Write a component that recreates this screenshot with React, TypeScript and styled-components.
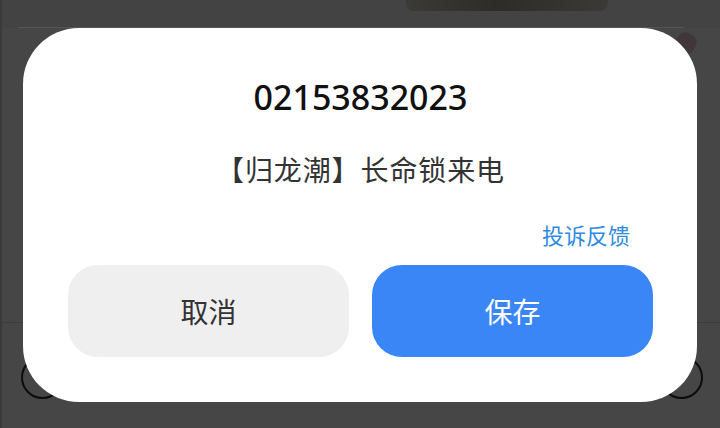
import React from "react";
import styled, { createGlobalStyle } from "styled-components";

const Global = createGlobalStyle`
  html, body { margin: 0; padding: 0; background: #454545; }
  body { font-family: "Noto Sans", "Noto Sans CJK SC", sans-serif; }
  * { box-sizing: border-box; }
`;

const Page = styled.div`
  position: relative;
  width: 720px;
  height: 428px;
  overflow: hidden;
  background: #464646;
  border-left: 2px solid #3a3a3a;
  display: flex;
  flex-direction: column;
`;

const TopBand = styled.div`
  position: relative;
  height: 28px;
  flex: none;
  background: #434343;
  &::after {
    content: "";
    position: absolute;
    left: 16px;
    right: 36px;
    bottom: 0;
    height: 1px;
    background: #555555;
  }
`;

const Thumb = styled.div`
  position: absolute;
  left: 404px;
  top: -10px;
  width: 202px;
  height: 21px;
  border-radius: 8px;
  z-index: 1;
  background: linear-gradient(90deg, #3c3a36 0%, #2e2c28 45%, #34322e 70%, #3b3a37 100%);
`;

const Divider = styled.div`
  position: absolute;
  left: 0;
  right: 0;
  top: 322px;
  height: 1px;
  background: #3c3c3c;
`;

const Ring = styled.div<{ $left: number }>`
  position: absolute;
  left: ${(p) => p.$left}px;
  top: 356px;
  width: 43px;
  height: 43px;
  border-radius: 50%;
  border: 2px solid #0c0c0c;
`;

const Blob = styled.div`
  position: absolute;
  left: 674px;
  top: 33px;
  width: 20px;
  height: 20px;
  border-radius: 40%;
  background: #41363a;
  transform: rotate(30deg);
`;

const Dialog = styled.div`
  position: relative;
  margin-left: 21px;
  width: 674px;
  height: 374px;
  background: #ffffff;
  border-radius: 56px;
  padding: 0 44px 0 45px;
  display: flex;
  flex-direction: column;
  align-items: center;
`;

const Phone = styled.div`
  margin-top: 49px;
  height: 40px;
  line-height: 40px;
  font-family: "Noto Sans", sans-serif;
  font-size: 34px;
  font-weight: 500;
  color: #111111;
`;

const Subtitle = styled.div`
  margin-top: 32px;
  height: 40px;
  line-height: 40px;
  font-family: "Noto Sans CJK SC", sans-serif;
  font-size: 28px;
  letter-spacing: 0.9px;
  color: #333333;
`;

const Link = styled.a`
  align-self: flex-end;
  margin-top: 30px;
  margin-right: 23px;
  height: 30px;
  line-height: 30px;
  font-family: "Noto Sans CJK SC", sans-serif;
  font-size: 22px;
  color: #2f8ae0;
  text-decoration: none;
`;

const Buttons = styled.div`
  margin-top: 16px;
  width: 100%;
  display: grid;
  grid-template-columns: 1fr 1fr;
  gap: 23px;
`;

const Button = styled.button<{ $primary?: boolean }>`
  height: 92px;
  border: none;
  border-radius: 30px;
  background: ${(p) => (p.$primary ? "#3a86f7" : "#efefef")};
  color: ${(p) => (p.$primary ? "#ffffff" : "#333333")};
  font-family: "Noto Sans CJK SC", sans-serif;
  font-size: 28px;
  padding: 0;
`;

export default function App() {
  return (
    <>
      <Global />
      <Page>
        <Thumb />
        <Divider />
        <Ring $left={19} />
        <Ring $left={658} />
        <Blob />
        <TopBand />
        <Dialog>
          <Phone>02153832023</Phone>
          <Subtitle>【归龙潮】长命锁来电</Subtitle>
          <Link href="#">投诉反馈</Link>
          <Buttons>
            <Button>取消</Button>
            <Button $primary>保存</Button>
          </Buttons>
        </Dialog>
      </Page>
    </>
  );
}
